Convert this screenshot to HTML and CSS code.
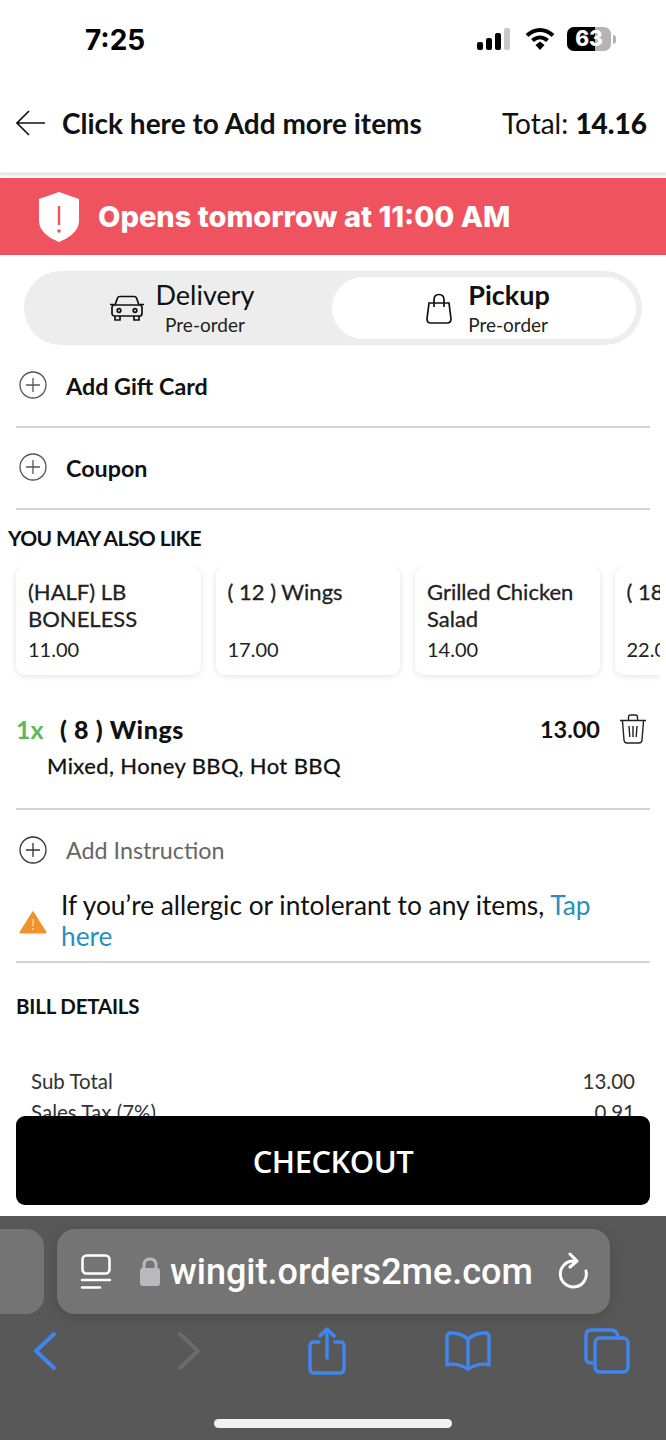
FILE: index.html
```html
<!DOCTYPE html>
<html>
<head>
<meta name="viewport" content="width=device-width, initial-scale=1">
<link rel="stylesheet" href="styles.css">
</head>
<body>
<div class="page">
  <div class="screen">
    <!-- phone status bar -->
    <div class="status">
      <span class="time">7:25</span>
      <div class="status-icons">
        <svg width="34" height="22" viewBox="0 0 34 22">
          <rect x="0" y="14" width="6" height="8" rx="2" fill="#000"/>
          <rect x="9" y="10" width="6" height="12" rx="2" fill="#000"/>
          <rect x="18" y="5" width="6" height="17" rx="2" fill="#000"/>
          <rect x="27" y="0" width="6" height="22" rx="2" fill="#c8c8c8"/>
        </svg>
        <svg width="30" height="24" viewBox="0 0 30 24">
          <path d="M2 8.500C10 1 20 1 28 8.500" fill="none" stroke="#000" stroke-width="4"/>
          <path d="M7.500 13.500C12 9.500 18 9.500 22.500 13.500" fill="none" stroke="#000" stroke-width="4"/>
          <path d="M10.500 18 15 14.500 19.500 18 15 23Z" fill="#000"/>
        </svg>
        <div class="battery"><div class="battery-fill"></div><span>63</span></div>
        <div class="battery-tip"></div>
      </div>
    </div>

    <div class="header">
      <div class="header-left">
        <svg width="30" height="26" viewBox="0 0 30 26"><path d="M29 13H1M13 1 1 13l12 12" fill="none" stroke="#111" stroke-width="1.600"/></svg>
        <span>Click here to Add more items</span>
      </div>
      <div class="total">Total: <b>14.16</b></div>
    </div>

    <div class="banner">
      <svg width="42" height="50" viewBox="0 0 42 50">
        <path d="M21 0 41 7V29C41 39 31 46 21 50 11 46 1 39 1 29V7Z" fill="#fff"/>
        <path d="M21 14V33" stroke="#ef5360" stroke-width="2.400"/>
        <circle cx="21" cy="39" r="1.800" fill="#ef5360"/>
      </svg>
      <span>Opens tomorrow at 11:00 AM</span>
    </div>

    <div class="tabs">
      <div class="tab">
        <svg width="36" height="26" viewBox="0 0 36 26" fill="none" stroke="#111" stroke-width="1.700">
          <path d="M6 10 8.500 3Q9 1.500 11 1.500H25Q27 1.500 27.500 3L30 10"/>
          <rect x="3" y="10" width="30" height="11" rx="2.500"/>
          <path d="M1 9.500H5M31 9.500H35M6 21V25H11V21M25 21V25H30V21"/>
          <circle cx="10" cy="15.500" r="1.800"/>
          <circle cx="26" cy="15.500" r="1.800"/>
        </svg>
        <div class="tab-text centered">
          <div class="tab-name">Delivery</div>
          <div class="tab-sub">Pre-order</div>
        </div>
      </div>
      <div class="tab active">
        <svg width="26" height="31" viewBox="0 0 26 31" fill="none" stroke="#111" stroke-width="1.700">
          <path d="M3 10H23L25 26Q25 30 21 30H5Q1 30 1 26Z"/>
          <path d="M8 14V7Q8 1.500 13 1.500 18 1.500 18 7V14"/>
        </svg>
        <div class="tab-text">
          <div class="tab-name strong">Pickup</div>
          <div class="tab-sub">Pre-order</div>
        </div>
      </div>
    </div>

    <div class="add-row first">
      <svg class="plus" width="28" height="28" viewBox="0 0 28 28"><circle cx="14" cy="14" r="13" fill="none" stroke="#555" stroke-width="1.300"/><path d="M14 7V21M7 14H21" stroke="#555" stroke-width="1.300"/></svg>
      <span>Add Gift Card</span>
    </div>
    <div class="add-row">
      <svg class="plus" width="28" height="28" viewBox="0 0 28 28"><circle cx="14" cy="14" r="13" fill="none" stroke="#555" stroke-width="1.300"/><path d="M14 7V21M7 14H21" stroke="#555" stroke-width="1.300"/></svg>
      <span>Coupon</span>
    </div>

    <h3 class="also-title">YOU MAY ALSO LIKE</h3>
    <div class="cards">
      <div class="card"><div class="card-name">(HALF) LB BONELESS</div><div class="card-price">11.00</div></div>
      <div class="card"><div class="card-name">( 12 ) Wings</div><div class="card-price">17.00</div></div>
      <div class="card"><div class="card-name">Grilled Chicken Salad</div><div class="card-price">14.00</div></div>
      <div class="card"><div class="card-name">( 18 ) Wings</div><div class="card-price">22.00</div></div>
    </div>

    <div class="item">
      <div class="item-top">
        <span class="qty">1x</span>
        <span class="item-name">( 8 ) Wings</span>
        <span class="item-price">13.00</span>
        <svg width="28" height="30" viewBox="0 0 28 30" fill="none" stroke="#222" stroke-width="1.400">
          <path d="M1 6.500H27M9.500 6V3Q9.500 1 11.500 1H16.500Q18.500 1 18.500 3V6"/>
          <path d="M3.500 7 5 26Q5.200 29 8 29H20Q22.800 29 23 26L24.500 7"/>
          <path d="M10 12 10.800 23M14 12V23M18 12 17.200 23"/>
        </svg>
      </div>
      <div class="item-mods">Mixed, Honey BBQ, Hot BBQ</div>
    </div>

    <div class="instruction">
      <svg class="plus" width="28" height="28" viewBox="0 0 28 28"><circle cx="14" cy="14" r="13" fill="none" stroke="#333" stroke-width="1.300"/><path d="M14 7V21M7 14H21" stroke="#333" stroke-width="1.300"/></svg>
      <span>Add Instruction</span>
    </div>

    <div class="allergy">
      <svg width="28" height="24" viewBox="0 0 28 24">
        <path d="M14 1.500 27 22Q27.500 23 26 23H2Q.5 23 1 22Z" fill="#f0922b" stroke="#f0922b" stroke-linejoin="round"/>
        <path d="M14 9V16" stroke="#fbd9ae" stroke-width="1.400"/>
        <circle cx="14" cy="19" r="1" fill="#fbd9ae"/>
      </svg>
      <p>If you’re allergic or intolerant to any items, <a>Tap here</a></p>
    </div>

    <h3 class="bill-title">BILL DETAILS</h3>
    <div class="bill-row"><span>Sub Total</span><span>13.00</span></div>
    <div class="bill-row"><span>Sales Tax (7%)</span><span>0.91</span></div>

    <!-- sticks over the page content -->
    <div class="checkout-wrap">
      <button class="checkout">CHECKOUT</button>
    </div>
  </div>

  <!-- safari toolbar -->
  <div class="browser">
    <div class="url-row">
      <div class="prev-tab"></div>
      <div class="url-pill">
        <svg width="32" height="36" viewBox="0 0 32 36" fill="none" stroke="#fff" stroke-width="2.600" stroke-linecap="round">
          <rect x="2.500" y="1.500" width="27" height="18" rx="4"/>
          <path d="M2 26H30M2 33.500H20"/>
        </svg>
        <svg class="lock" width="22" height="30" viewBox="0 0 22 30">
          <rect x="1" y="11" width="20" height="18" rx="3" fill="#b9b9bd"/>
          <path d="M5 12V8Q5 2 11 2 17 2 17 8V12" fill="none" stroke="#b9b9bd" stroke-width="3"/>
        </svg>
        <span class="url">wingit.orders2me.com</span>
        <svg width="32" height="40" viewBox="0 0 32 40" fill="none" stroke="#fff" stroke-width="3" stroke-linecap="round" stroke-linejoin="round">
          <path d="M16 9A13 13 0 1 0 28 19"/>
          <path d="M12 2 19 9 12 15"/>
        </svg>
      </div>
    </div>
    <div class="nav-icons">
      <svg width="24" height="40" viewBox="0 0 24 40" fill="none" stroke="#3f87ee" stroke-width="4" stroke-linecap="round" stroke-linejoin="round"><path d="M21 3 3 20 21 37"/></svg>
      <svg class="nav-forward" width="24" height="40" viewBox="0 0 24 40" fill="none" stroke="#6b6b6b" stroke-width="4" stroke-linecap="round" stroke-linejoin="round"><path d="M3 3 21 20 3 37"/></svg>
      <svg class="nav-share" width="38" height="48" viewBox="0 0 38 48" fill="none" stroke="#3f87ee" stroke-width="3.400" stroke-linecap="round" stroke-linejoin="round"><path d="M11 15H6Q2 15 2 19V42Q2 46 6 46H32Q36 46 36 42V19Q36 15 32 15H27"/><path d="M19 31V3M12 9 19 2 26 9"/></svg>
      <svg class="nav-book" width="48" height="40" viewBox="0 0 48 40" fill="none" stroke="#3f87ee" stroke-width="3.400" stroke-linejoin="round"><path d="M24 8Q17 2 7 2 3 2 3 6V34Q12 31 24 38 36 31 45 34V6Q45 2 41 2 31 2 24 8V38"/></svg>
      <svg class="nav-tabs" width="46" height="46" viewBox="0 0 46 46" fill="none" stroke="#3f87ee" stroke-width="3.400"><path d="M9 35H7Q2 35 2 30V7Q2 2 7 2H27Q33 2 34 9"/><rect x="11" y="10" width="33" height="34" rx="5"/></svg>
    </div>
    <div class="home-bar"></div>
  </div>
</div>
</body>
</html>
```

FILE: styles.css
```css
* {
  box-sizing: border-box;
}

body, html {
  margin: 0;
  height: 100%;
  font-family: Lato, Arial, sans-serif;
  color: #111;
  background: #fff;
}

.page {
  width: 666px;
  height: 1440px;
  display: flex;
  flex-direction: column;
  overflow: hidden;
}

.screen {
  position: relative;
  height: 1216px;
  overflow: hidden;
  flex-shrink: 0;
}

/* Status bar */
.status {
  height: 75px;
  display: flex;
  justify-content: space-between;
  align-items: flex-start;
  padding: 24px 50px 0 85px;
}

.time {
  font-family: Inter, Roboto, sans-serif;
  font-weight: 700;
  font-size: 28px;
  line-height: 32px;
  color: #000;
}

.status-icons {
  display: flex;
  align-items: center;
  padding-top: 3px;
}

.status-icons svg:first-child {
  margin-right: 14px;
}

.battery {
  position: relative;
  width: 44px;
  height: 24px;
  margin-left: 12px;
  background: #b4b4b4;
  border-radius: 7px;
  overflow: hidden;
  text-align: center;
}

.battery-fill {
  position: absolute;
  left: 0;
  top: 0;
  bottom: 0;
  width: 28px;
  background: #000;
}

.battery span {
  position: relative;
  font-family: Inter, Roboto, sans-serif;
  font-weight: 800;
  font-size: 21px;
  line-height: 24px;
  color: #fff;
}

.battery-tip {
  width: 3px;
  height: 9px;
  margin-left: 2px;
  background: #b4b4b4;
  border-radius: 0 3px 3px 0;
}

/* Header */
.header {
  height: 98px;
  display: flex;
  justify-content: space-between;
  align-items: center;
  padding: 0 19px 2px 16px;
  border-bottom: 1px solid #eee;
  box-shadow: 0 3px 2px #e6e6e6;
}

.header-left {
  display: flex;
  align-items: center;
  gap: 16px;
  font-size: 28px;
  font-weight: 700;
}

.total {
  font-size: 28px;
}

.total b {
  font-weight: 900;
}

.banner {
  height: 77px;
  margin-top: 5px;
  background: #ef5360;
  display: flex;
  align-items: center;
  gap: 18px;
  padding-left: 38px;
  color: #fff;
  font-family: Inter, Roboto, sans-serif;
  font-size: 29px;
  font-weight: 800;
}

/* Delivery / pickup switch */
.tabs {
  display: flex;
  width: 618px;
  height: 74px;
  margin: 16px 0 0 24px;
  padding: 6px;
  background: #ededed;
  border-radius: 37px;
}

.tab {
  flex: 1;
  display: flex;
  align-items: center;
  justify-content: center;
  gap: 10px;
  border-radius: 31px;
  padding-left: 2px;
}

.tab.active {
  flex: 0 0 304px;
  background: #fff;
  gap: 16px;
  padding-left: 8px;
}

.tab-text.centered {
  text-align: center;
}

.tab-name {
  font-size: 27px;
  line-height: 34px;
}

.tab-name.strong {
  font-weight: 700;
}

.tab-sub {
  font-size: 19px;
  line-height: 26px;
  color: #222;
}

/* Plus rows */
.add-row {
  height: 82px;
  margin: 0 16px;
  display: flex;
  align-items: center;
  gap: 19px;
  padding: 0 0 0 3px;
  border-bottom: 2px solid #d4d4d4;
  font-size: 23.300px;
  font-weight: 700;
}

.add-row.first {
  height: 83px;
}

.add-row .plus {
  margin-bottom: 2px;
}

.also-title {
  margin: 15px 0 0 8px;
  font-size: 21px;
  line-height: 26px;
  font-weight: 700;
  letter-spacing: -0.600px;
}

/* Suggestion cards */
.cards {
  display: flex;
  gap: 15px;
  padding-left: 16px;
  margin-top: 16px;
  width: 660px;
  overflow: hidden;
  padding-bottom: 6px;
}

.card {
  flex: 0 0 184.500px;
  height: 108px;
  padding: 11px 12px 0;
  border-radius: 9px;
  background: #fff;
  box-shadow: 0 1px 6px rgba(0, 0, 0, 0.12);
}

.card-name {
  height: 54px;
  font-size: 22px;
  line-height: 27px;
  color: #222;
  -webkit-text-stroke: 0.300px #222;
}

.card-price {
  margin-top: 3px;
  font-size: 20px;
  line-height: 28px;
  color: #222;
}

/* Cart item */
.item {
  margin: 31px 16px 0;
  height: 98px;
  border-bottom: 2px solid #d4d4d4;
}

.item-top {
  display: flex;
  align-items: center;
  height: 34px;
  padding-right: 3px;
}

.qty {
  color: #5cb85c;
  font-size: 25px;
  font-weight: 700;
  width: 44px;
}

.item-name {
  flex: 1;
  font-size: 25px;
  font-weight: 900;
  letter-spacing: 0.600px;
}

.item-price {
  font-size: 23.500px;
  font-weight: 700;
  margin-right: 19px;
}

.item-mods {
  margin: 5px 0 0 31px;
  font-size: 22px;
  line-height: 30px;
  letter-spacing: 0.400px;
  -webkit-text-stroke: 0.300px #111;
}

.instruction {
  height: 80px;
  margin: 0 16px;
  display: flex;
  align-items: center;
  gap: 19px;
  padding-left: 3px;
  font-size: 23.300px;
  color: #666;
}

.allergy {
  margin: 0 16px;
  display: flex;
  align-items: center;
  gap: 14px;
  padding: 0 40px 9px 3px;
  border-bottom: 2px solid #d4d4d4;
}

.allergy svg {
  flex-shrink: 0;
  margin-top: 2px;
}

.allergy p {
  margin: 0;
  font-size: 26.300px;
  line-height: 31px;
}

.allergy a {
  color: #2a8fbd;
}

/* Bill */
.bill-title {
  margin: 30px 16px 0;
  font-size: 20.500px;
  line-height: 26px;
  font-weight: 700;
  letter-spacing: -0.200px;
}

.bill-row {
  display: flex;
  justify-content: space-between;
  margin: 0 31px;
  font-size: 20.500px;
  line-height: 31px;
  color: #333;
}

.bill-title + .bill-row {
  margin-top: 47px;
}

.checkout-wrap {
  position: absolute;
  left: 0;
  right: 0;
  bottom: 0;
  height: 100px;
  padding: 0 16px;
  background: #fff;
}

.checkout {
  display: block;
  width: 100%;
  height: 89px;
  border: none;
  border-radius: 9px;
  background: #000;
  color: #fff;
  font-family: "Open Sans", Lato, sans-serif;
  font-size: 31px;
  font-weight: 600;
  letter-spacing: -0.500px;
}

/* Browser chrome */
.browser {
  flex: 1;
  background: #585858;
  position: relative;
}

.url-row {
  display: flex;
  gap: 13px;
  padding-top: 13px;
}

.prev-tab {
  width: 44px;
  height: 85px;
  background: #747474;
  border-radius: 0 18px 18px 0;
}

.url-pill {
  width: 553px;
  height: 85px;
  background: #747474;
  border-radius: 18px;
  box-shadow: 0 3px 14px rgba(0, 0, 0, 0.15);
  display: flex;
  align-items: center;
  padding: 0 20px 0 23px;
}

.lock {
  margin-left: 27px;
}

.url {
  flex: 1;
  margin-left: 9px;
  color: #fff;
  font-family: Roboto, Inter, sans-serif;
  font-size: 36px;
  font-weight: 500;
  white-space: nowrap;
}

.nav-icons {
  display: flex;
  align-items: center;
  height: 70px;
  padding-left: 33px;
  margin-top: 2px;
}

.nav-forward {
  margin-left: 120px;
}

.nav-share {
  margin-left: 107px;
}

.nav-book {
  margin-left: 98px;
}

.nav-tabs {
  margin-left: 92px;
}

.home-bar {
  position: absolute;
  left: 214px;
  bottom: 12px;
  width: 238px;
  height: 9px;
  border-radius: 5px;
  background: #f2f2f2;
}
```
